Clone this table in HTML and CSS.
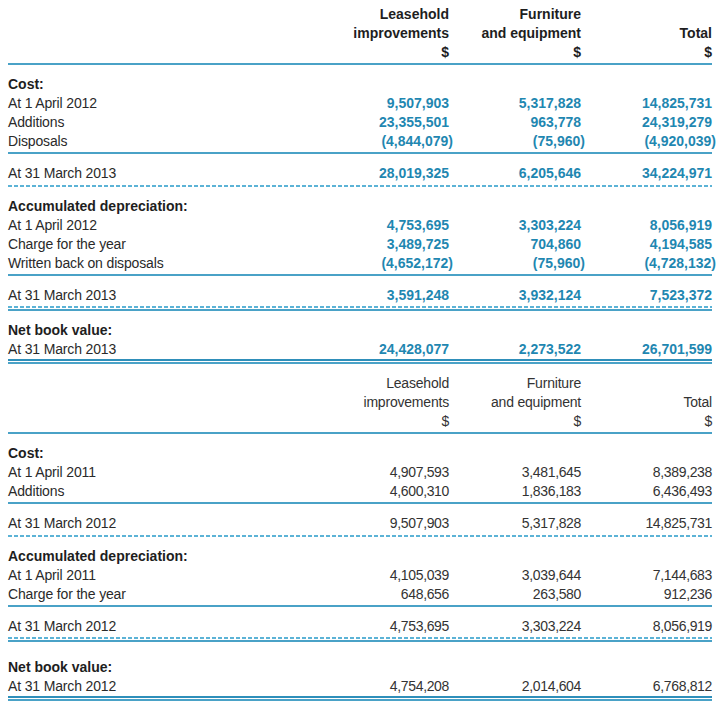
FILE: index.html
```html
<!DOCTYPE html>
<html>
<head>
<meta charset="utf-8">
<link rel="stylesheet" href="styles.css">
</head>
<body>
<div class="statement current">
  <div class="row head">
    <div></div>
    <div class="num">Leasehold<br>improvements<br>$</div>
    <div class="num">Furniture<br>and equipment<br>$</div>
    <div class="num"><br>Total<br>$</div>
  </div>
  <div class="rule solid"></div>

  <div class="row"><div class="label title">Cost:</div></div>
  <div class="row"><div class="label">At 1 April 2012</div><div class="num">9,507,903</div><div class="num">5,317,828</div><div class="num">14,825,731</div></div>
  <div class="row"><div class="label">Additions</div><div class="num">23,355,501</div><div class="num">963,778</div><div class="num">24,319,279</div></div>
  <div class="row"><div class="label">Disposals</div><div class="num"><span class="neg">(4,844,079)</span></div><div class="num"><span class="neg">(75,960)</span></div><div class="num"><span class="neg">(4,920,039)</span></div></div>
  <div class="rule solid"></div>
  <div class="row"><div class="label">At 31 March 2013</div><div class="num">28,019,325</div><div class="num">6,205,646</div><div class="num">34,224,971</div></div>
  <div class="rule dashed"></div>

  <div class="row"><div class="label title">Accumulated depreciation:</div></div>
  <div class="row"><div class="label">At 1 April 2012</div><div class="num">4,753,695</div><div class="num">3,303,224</div><div class="num">8,056,919</div></div>
  <div class="row"><div class="label">Charge for the year</div><div class="num">3,489,725</div><div class="num">704,860</div><div class="num">4,194,585</div></div>
  <div class="row"><div class="label">Written back on disposals</div><div class="num"><span class="neg">(4,652,172)</span></div><div class="num"><span class="neg">(75,960)</span></div><div class="num"><span class="neg">(4,728,132)</span></div></div>
  <div class="rule solid"></div>
  <div class="row"><div class="label">At 31 March 2013</div><div class="num">3,591,248</div><div class="num">3,932,124</div><div class="num">7,523,372</div></div>
  <div class="rule dashed-solid"></div>

  <div class="row"><div class="label title">Net book value:</div></div>
  <div class="row"><div class="label">At 31 March 2013</div><div class="num">24,428,077</div><div class="num">2,273,522</div><div class="num">26,701,599</div></div>
  <div class="rule double"></div>
</div>

<div class="statement prior">
  <div class="row head">
    <div></div>
    <div class="num">Leasehold<br>improvements<br>$</div>
    <div class="num">Furniture<br>and equipment<br>$</div>
    <div class="num"><br>Total<br>$</div>
  </div>
  <div class="rule solid"></div>

  <div class="row"><div class="label title">Cost:</div></div>
  <div class="row"><div class="label">At 1 April 2011</div><div class="num">4,907,593</div><div class="num">3,481,645</div><div class="num">8,389,238</div></div>
  <div class="row"><div class="label">Additions</div><div class="num">4,600,310</div><div class="num">1,836,183</div><div class="num">6,436,493</div></div>
  <div class="rule solid"></div>
  <div class="row"><div class="label">At 31 March 2012</div><div class="num">9,507,903</div><div class="num">5,317,828</div><div class="num">14,825,731</div></div>
  <div class="rule dashed"></div>

  <div class="row"><div class="label title">Accumulated depreciation:</div></div>
  <div class="row"><div class="label">At 1 April 2011</div><div class="num">4,105,039</div><div class="num">3,039,644</div><div class="num">7,144,683</div></div>
  <div class="row"><div class="label">Charge for the year</div><div class="num">648,656</div><div class="num">263,580</div><div class="num">912,236</div></div>
  <div class="rule solid"></div>
  <div class="row"><div class="label">At 31 March 2012</div><div class="num">4,753,695</div><div class="num">3,303,224</div><div class="num">8,056,919</div></div>
  <div class="rule dashed-solid wide-gap"></div>

  <div class="row"><div class="label title">Net book value:</div></div>
  <div class="row"><div class="label">At 31 March 2012</div><div class="num">4,754,208</div><div class="num">2,014,604</div><div class="num">6,768,812</div></div>
  <div class="rule double last"></div>
</div>
</body>
</html>
```

FILE: styles.css
```css
html {
  background: #ffffff;
  overflow: hidden;
}

body {
  margin: 5px 0 0 0;
  padding: 0 8px;
  font-family: "Liberation Sans", Arial, Helvetica, sans-serif;
  font-size: 14px;
  line-height: 19px;
  color: #2a2a2a;
}

.statement {
  display: flex;
  flex-direction: column;
}

.row {
  display: grid;
  grid-template-columns: 309px 132px 132px 1fr;
  height: 19px;
}

.row.head {
  height: auto;
}

.num {
  text-align: right;
  white-space: nowrap;
}

.label {
  white-space: nowrap;
  letter-spacing: -0.15px;
}

.title {
  font-weight: 700;
  color: #1e1e1e;
  letter-spacing: 0;
}

.current .num {
  font-weight: 700;
  color: #1f87b1;
}

.current .head .num {
  color: #1e1e1e;
}

.prior .num {
  color: #333333;
  letter-spacing: -0.35px;
}

.prior .head .num {
  letter-spacing: -0.2px;
}

.neg {
  display: inline-block;
  margin-right: -4px;
}

.rule {
  margin-top: 1px;
  margin-bottom: 10px;
}

.rule.solid {
  height: 2px;
  background: #4aa2c7;
}

.rule.dashed {
  margin-top: 2px;
  height: 2px;
  background: repeating-linear-gradient(to right, #5cb3d6 0 4px, transparent 4px 6px);
}

.rule.dashed-solid {
  height: 5px;
  background:
    repeating-linear-gradient(to right, #5cb3d6 0 4px, transparent 4px 6px) top / 100% 2px no-repeat,
    linear-gradient(#4aa2c7, #4aa2c7) bottom / 100% 2px no-repeat;
}

.rule.dashed-solid.wide-gap {
  margin-bottom: 16px;
}

.rule.double {
  margin-top: 0;
  height: 5px;
  background:
    linear-gradient(#2f8fba, #2f8fba) top / 100% 2px no-repeat,
    linear-gradient(#4aa2c7, #4aa2c7) bottom / 100% 2px no-repeat;
}

.rule.last {
  margin-bottom: 0;
}
```
